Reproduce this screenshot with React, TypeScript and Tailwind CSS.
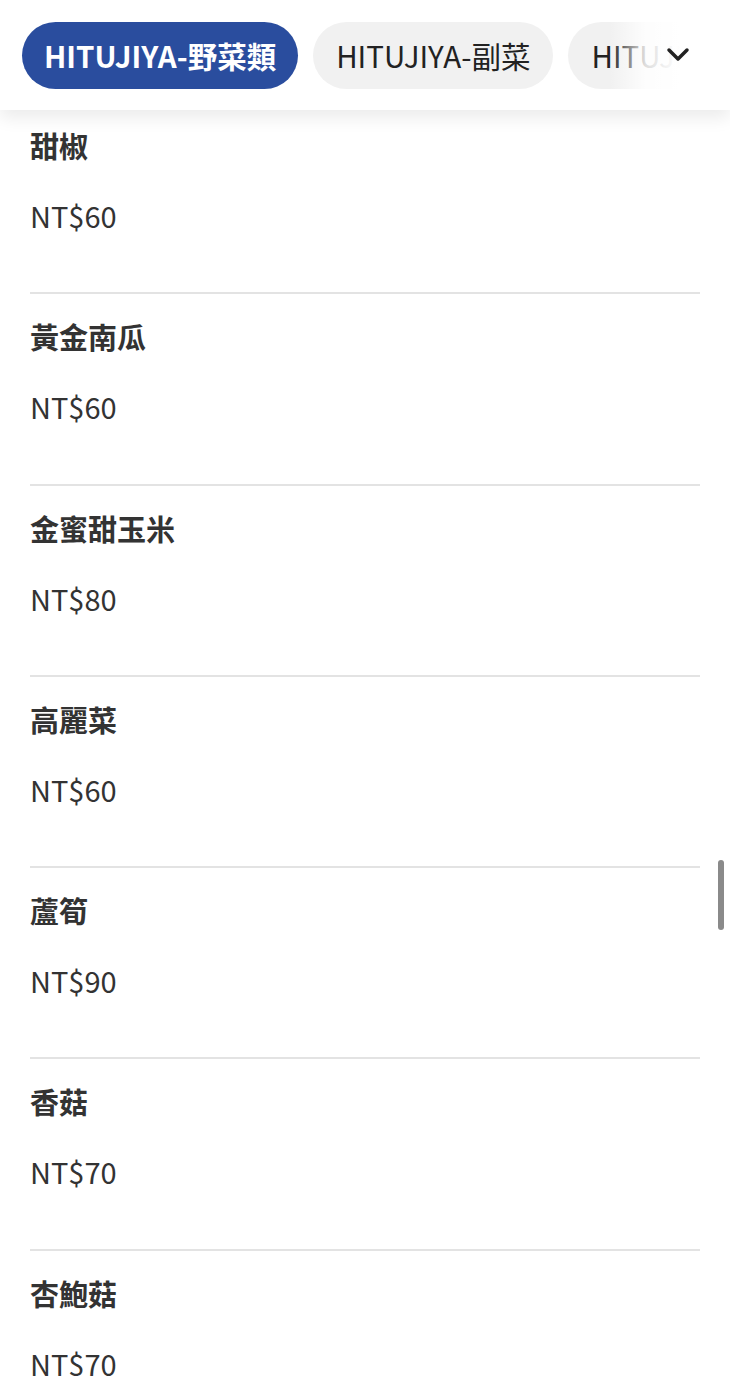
import React from "react";

const items = [
  { name: "甜椒", price: "NT$60" },
  { name: "黃金南瓜", price: "NT$60" },
  { name: "金蜜甜玉米", price: "NT$80" },
  { name: "高麗菜", price: "NT$60" },
  { name: "蘆筍", price: "NT$90" },
  { name: "香菇", price: "NT$70" },
  { name: "杏鮑菇", price: "NT$70" },
];

const font = { fontFamily: '"Noto Sans CJK TC", "Noto Sans", sans-serif' };

export default function App() {
  return (
    <div className="relative w-[730px] h-[1376px] overflow-hidden bg-white" style={font}>
      <div className="relative z-10 h-[110px] bg-white shadow-[0_8px_16px_rgba(0,0,0,0.08)] flex items-center pl-[22px] gap-[15px]">
        <div className="h-[67px] shrink-0 rounded-full bg-[#2a4d9e] px-[22px] flex items-center text-white text-[29.5px] font-bold">
          HITUJIYA-野菜類
        </div>
        <div className="h-[67px] shrink-0 rounded-full bg-[#f1f1f1] px-[23px] flex items-center text-[#222] text-[29.5px]">
          HITUJIYA-副菜
        </div>
        <div className="relative h-[67px] w-[112px] shrink-0 overflow-hidden rounded-l-full bg-[#f1f1f1] pl-[23px] flex items-center text-[#222] text-[29.5px]">
          HITUJIYA
          <div className="absolute inset-y-0 right-0 w-[70px] bg-gradient-to-r from-transparent via-white/85 to-white" />
        </div>
        <div className="absolute left-[665px] top-[44px]">
          <svg width="26" height="24" viewBox="0 0 26 24" fill="none">
            <path d="M4 6 L13 15 L22 6" stroke="#222" strokeWidth="3.5" strokeLinecap="round" strokeLinejoin="round" />
          </svg>
        </div>
      </div>
      <div className="px-[30px] mt-[-7px]">
        {items.map((it, i) => (
          <div key={i} className="pt-[22px] pb-[57.3px] border-b-2 border-[#e3e3e3]">
            <div className="text-[29px] leading-[40px] font-bold text-[#333]">{it.name}</div>
            <div className="mt-[30px] text-[29px] leading-[40px] text-[#333]">{it.price}</div>
          </div>
        ))}
      </div>
      <div className="absolute left-[718px] top-[860px] w-[6px] h-[70px] rounded-full bg-[#8a8a8a]" />
    </div>
  );
}
